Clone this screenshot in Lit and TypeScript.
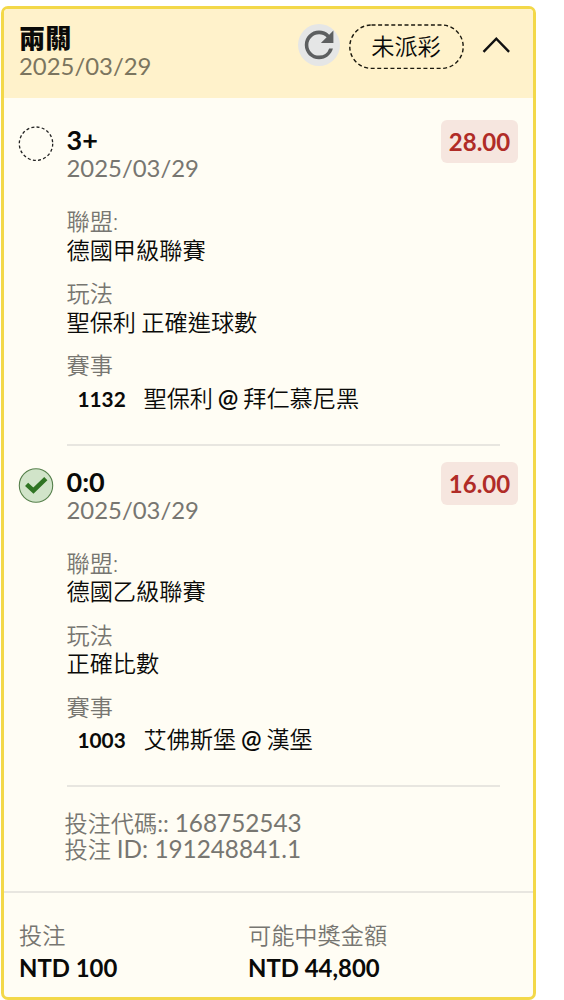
import { LitElement, html, css, svg } from "lit";
import { customElement, property } from "lit/decorators.js";

interface Leg {
  pick: string;
  date: string;
  odds: string;
  won: boolean;
  league: string;
  market: string;
  code: string;
  home: string;
  away: string;
}

const LEGS: Leg[] = [
  { pick: "3+", date: "2025/03/29", odds: "28.00", won: false, league: "德國甲級聯賽", market: "聖保利 正確進球數", code: "1132", home: "聖保利", away: "拜仁慕尼黑" },
  { pick: "0:0", date: "2025/03/29", odds: "16.00", won: true, league: "德國乙級聯賽", market: "正確比數", code: "1003", home: "艾佛斯堡", away: "漢堡" },
];

@customElement("bet-leg")
class BetLeg extends LitElement {
  @property({ attribute: false }) leg!: Leg;

  static styles = css`
    :host { display: block; height: 341.5px; box-sizing: border-box; }
    .row { display: grid; grid-template-columns: 36px 1fr 77px; column-gap: 13px; padding: 0 15px 0 13.5px; }
    .status { width: 36px; height: 36px; margin-top: 6px; display: block; }
    .pick { font-size: 27px; font-weight: 700; line-height: 28px; margin-top: 6px; }
    .date { font-size: 23.9px; line-height: 28px; color: #777671; }
    .odds { height: 43px; line-height: 43px; border-radius: 6px; background: #f6e6df; color: #b02c27; font-size: 24px; font-weight: 700; text-align: center; }
    .details { margin-left: 62.5px; margin-right: 33px; padding-top: 25px; font-weight: 350; }
    .label { color: #777671; line-height: 28.5px; }
    .value { line-height: 28.5px; margin-bottom: 15px; word-spacing: -1px; }
    .match { display: flex; align-items: baseline; line-height: 28px; margin: 4.3px 0 0 11px; }
    .code { font-size: 20.8px; font-weight: 700; width: 66px; }
    .teams { word-spacing: -1.5px; }
    .at { font-weight: 600; font-size: 24.5px; }
    .rule { height: 2px; background: #e8e6e0; margin-top: 31px; }
  `;

  render() {
    const l = this.leg;
    return html`
      <div class="row">
        <svg class="status" viewBox="0 0 36 36">
          ${l.won
            ? svg`<circle cx="18" cy="17.5" r="16.7" fill="#d1e4c9" stroke="#56804c" stroke-width="1.1"/>
                <path d="M8.6 16.4L15.4 22.6L27.8 10.6" fill="none" stroke="#2f7423" stroke-width="4.6"/>`
            : svg`<circle cx="18" cy="17.7" r="16.7" fill="none" stroke="#222" stroke-width="1.3" stroke-dasharray="3 2.25"/>`}
        </svg>
        <div>
          <div class="pick">${l.pick}</div>
          <div class="date">${l.date}</div>
        </div>
        <div class="odds">${l.odds}</div>
      </div>
      <div class="details">
        <div class="label">聯盟:</div>
        <div class="value">${l.league}</div>
        <div class="label">玩法</div>
        <div class="value">${l.market}</div>
        <div class="label">賽事</div>
        <div class="match"><span class="code">${l.code}</span><span class="teams">${l.home} <span class="at">@</span> ${l.away}</span></div>
        <div class="rule"></div>
      </div>
    `;
  }
}

@customElement("app-root")
class AppRoot extends LitElement {
  static styles = css`
    :host {
      display: block;
      height: 1000px;
      box-sizing: border-box;
      padding: 6px 0 0 1px;
      overflow: hidden;
      background: #fff;
      color: #0a0a08;
      font-family: Lato, "Noto Sans CJK TC", sans-serif;
      font-size: 23.2px;
    }
    .card { width: 535px; height: 994px; box-sizing: border-box; border: 3px solid #f3d849; border-radius: 7px; background: #fffdf4; overflow: hidden; }
    .head { height: 88.5px; box-sizing: border-box; background: #fff2cb; display: flex; padding: 15px 22.5px 0 15px; }
    .titles { flex: 1; }
    .title { font-size: 26.2px; font-weight: 800; line-height: 27px; margin-top: 1px; }
    .date { font-size: 23.9px; line-height: 28px; color: #7b755f; }
    .refresh { width: 42px; height: 42px; display: block; margin-right: 9px; }
    .pill { width: 115px; height: 46px; display: grid; margin-right: 17px; }
    .pill > * { grid-area: 1 / 1; }
    .pill-text { text-align: center; line-height: 45px; font-weight: 350; }
    .chevron { width: 30px; height: 18px; margin-top: 12px; }
    .legs { padding-top: 22.5px; }
    .ids { margin: 6.5px 0 0 60.5px; color: #777671; line-height: 26.5px; }
    .cjk { font-weight: 350; }
    .num { font-size: 24.3px; }
    .foot { margin-top: 28px; border-top: 2px solid #e8e6e0; display: grid; grid-template-columns: 229px 1fr; padding: 27.3px 0 0 15px; }
    .label { color: #777671; line-height: 31px; font-weight: 350; }
    .amount { font-weight: 700; font-size: 23.9px; line-height: 34px; }
  `;

  render() {
    return html`
      <div class="card">
        <div class="head">
          <div class="titles">
            <div class="title">兩關</div>
            <div class="date">2025/03/29</div>
          </div>
          <svg class="refresh" viewBox="0 0 42 42">
            <circle cx="21" cy="21" r="21" fill="#e5e6e6"/>
            <path transform="translate(-.4 -.6) scale(1.79)" fill="#5d5f60" d="M17.65 6.35A7.958 7.958 0 0 0 12 4c-4.42 0-7.99 3.58-7.99 8s3.57 8 7.99 8c3.73 0 6.84-2.55 7.73-6h-2.08A5.99 5.99 0 0 1 12 18c-3.31 0-6-2.69-6-6s2.69-6 6-6c1.66 0 3.14.69 4.22 1.78L13 11h7V4l-2.35 2.35z"/>
          </svg>
          <div class="pill">
            <svg width="115" height="46" viewBox="0 0 115 46"><rect x=".8" y="1" width="113.4" height="43.4" rx="21.7" fill="none" stroke="#1b190f" stroke-width="1.4" stroke-dasharray="4 2.6"/></svg>
            <span class="pill-text">未派彩</span>
          </div>
          <svg class="chevron" viewBox="0 0 30 18"><path d="M2.5 15.8L15.3 2.6L28.1 15.8" fill="none" stroke="#111" stroke-width="2.4"/></svg>
        </div>
        <div class="legs">${LEGS.map((l) => html`<bet-leg .leg=${l}></bet-leg>`)}</div>
        <div class="ids">
          <div><span class="cjk">投注代碼</span>:: <span class="num">168752543</span></div>
          <div><span class="cjk">投注</span> <span class="num">ID: 191248841.1</span></div>
        </div>
        <div class="foot">
          <div><div class="label">投注</div><div class="amount">NTD 100</div></div>
          <div><div class="label">可能中獎金額</div><div class="amount">NTD 44,800</div></div>
        </div>
      </div>
    `;
  }
}
